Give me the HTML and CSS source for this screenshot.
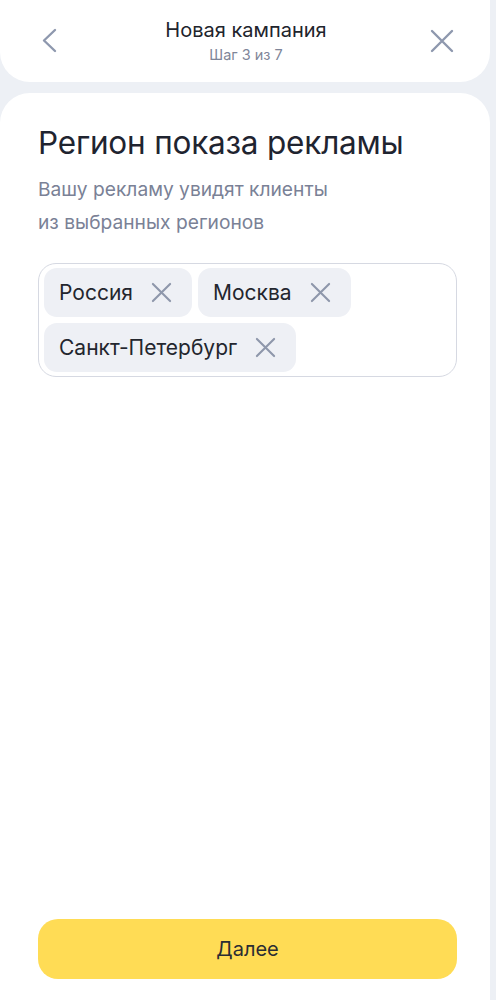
FILE: index.html
```html
<!DOCTYPE html>
<html lang="ru">
<head>
<meta charset="utf-8">
<link rel="stylesheet" href="styles.css">
</head>
<body>
<div class="page">
  <header class="topbar">
    <button class="icon-btn back" aria-label="Назад">
      <svg width="24" height="26" viewBox="0 0 24 26"><path d="M17 2 L6 12.5 L17 23" fill="none" stroke="#8e98ae" stroke-width="2.4" stroke-linecap="round" stroke-linejoin="round"/></svg>
    </button>
    <div class="titles">
      <div class="title">Новая кампания</div>
      <div class="step">Шаг 3 из 7</div>
    </div>
    <button class="icon-btn close" aria-label="Закрыть">
      <svg width="24" height="24" viewBox="0 0 24 24"><path d="M2 2 L22 22 M22 2 L2 22" fill="none" stroke="#8e98ae" stroke-width="2.4" stroke-linecap="round"/></svg>
    </button>
  </header>
  <main class="card">
    <h1 class="heading">Регион показа рекламы</h1>
    <p class="desc">Вашу рекламу увидят клиенты<br>из выбранных регионов</p>
    <div class="tags">
      <span class="chip">Россия<svg class="x" width="21" height="21" viewBox="0 0 22 22"><path d="M2 2 L20 20 M20 2 L2 20" fill="none" stroke="#8e97ab" stroke-width="2.2" stroke-linecap="round"/></svg></span>
      <span class="chip">Москва<svg class="x" width="21" height="21" viewBox="0 0 22 22"><path d="M2 2 L20 20 M20 2 L2 20" fill="none" stroke="#8e97ab" stroke-width="2.2" stroke-linecap="round"/></svg></span>
      <span class="chip">Санкт-Петербург<svg class="x" width="21" height="21" viewBox="0 0 22 22"><path d="M2 2 L20 20 M20 2 L2 20" fill="none" stroke="#8e97ab" stroke-width="2.2" stroke-linecap="round"/></svg></span>
    </div>
    <div class="spacer"></div>
    <button class="next">Далее</button>
  </main>
</div>
</body>
</html>
```

FILE: styles.css
```css
* { box-sizing: border-box; }
html, body { margin: 0; padding: 0; }
body {
  background: #edf0f5;
  font-family: Inter, "Noto Sans", sans-serif;
  color: #21242c;
}
.page {
  width: 490px;
  height: 1000px;
  display: flex;
  flex-direction: column;
  gap: 11px;
}
.topbar {
  background: #fff;
  height: 82px;
  border-radius: 0 0 30px 30px;
  display: flex;
  align-items: center;
  justify-content: space-between;
  padding: 0 28px 0 30px;
}
.icon-btn {
  background: none;
  border: 0;
  padding: 0;
  width: 40px;
  height: 40px;
  display: flex;
  align-items: center;
  justify-content: center;
  cursor: pointer;
}
.titles {
  text-align: center;
  margin-top: 0;
}
.title {
  font-size: 20px;
  line-height: 26px;
  color: #21242c;
}
.step {
  font-size: 14.5px;
  line-height: 20px;
  color: #7f8699;
  margin-top: 2px;
}
.card {
  flex: 1;
  background: #fff;
  border-radius: 30px 30px 0 0;
  padding: 30px 33px 21px 38px;
  display: flex;
  flex-direction: column;
}
.heading {
  margin: 0;
  font-weight: 400;
  font-size: 31.5px;
  line-height: 40px;
  letter-spacing: -0.2px;
  color: #1f2430;
}
.desc {
  margin: 10px 0 0;
  font-size: 19.2px;
  line-height: 33px;
  color: #7a8196;
}
.tags {
  margin-top: 24px;
  border: 1px solid #d6d9e2;
  border-radius: 18px;
  padding: 4px 5px;
  display: flex;
  flex-wrap: wrap;
  gap: 5px 6px;
  min-height: 114px;
}
.chip {
  background: #eef0f5;
  border-radius: 13px;
  height: 49px;
  display: inline-flex;
  align-items: center;
  gap: 18px;
  padding: 0 20px 0 15px;
  font-size: 21px;
  color: #23262e;
}
.x { display: block; }
.spacer { flex: 1; }
.next {
  height: 60px;
  border: 0;
  border-radius: 20px;
  background: #ffdc55;
  font-family: inherit;
  font-size: 20px;
  color: #2a2c33;
  cursor: pointer;
}
```
